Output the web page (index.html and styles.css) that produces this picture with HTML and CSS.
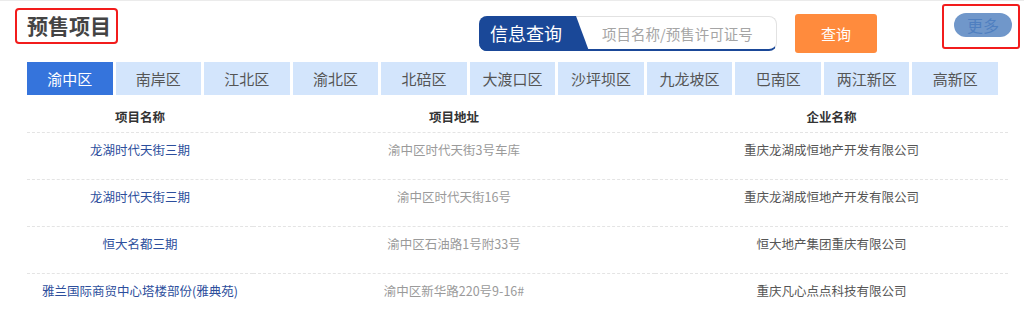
FILE: index.html
```html
<!DOCTYPE html>
<html lang="zh-CN">

<head>
    <meta charset="UTF-8">
    <meta name="viewport" content="width=device-width, initial-scale=1.0">
    <title>预售项目</title>
    <link rel="stylesheet" href="styles.css">
</head>

<body>
    <div class="page">
        <div class="top">
            <div class="title-box">预售项目</div>
            <div class="search">
                <div class="search-label">信息查询</div>
                <input class="search-input" type="text" placeholder="项目名称/预售许可证号">
            </div>
            <button class="query-btn">查询</button>
            <div class="more-box">
                <span class="more">更多</span>
            </div>
        </div>

        <div class="tabs">
            <div class="tab active">渝中区</div>
            <div class="tab">南岸区</div>
            <div class="tab">江北区</div>
            <div class="tab">渝北区</div>
            <div class="tab">北碚区</div>
            <div class="tab">大渡口区</div>
            <div class="tab">沙坪坝区</div>
            <div class="tab">九龙坡区</div>
            <div class="tab">巴南区</div>
            <div class="tab">两江新区</div>
            <div class="tab">高新区</div>
        </div>

        <table class="list">
            <thead>
                <tr>
                    <th class="col-name">项目名称</th>
                    <th class="col-addr">项目地址</th>
                    <th class="col-corp">企业名称</th>
                </tr>
            </thead>
            <tbody>
                <tr>
                    <td class="name">龙湖时代天街三期</td>
                    <td class="addr">渝中区时代天街3号车库</td>
                    <td class="corp">重庆龙湖成恒地产开发有限公司</td>
                </tr>
                <tr>
                    <td class="name">龙湖时代天街三期</td>
                    <td class="addr">渝中区时代天街16号</td>
                    <td class="corp">重庆龙湖成恒地产开发有限公司</td>
                </tr>
                <tr>
                    <td class="name">恒大名都三期</td>
                    <td class="addr">渝中区石油路1号附33号</td>
                    <td class="corp">恒大地产集团重庆有限公司</td>
                </tr>
                <tr>
                    <td class="name">雅兰国际商贸中心塔楼部份(雅典苑)</td>
                    <td class="addr">渝中区新华路220号9-16#</td>
                    <td class="corp">重庆凡心点点科技有限公司</td>
                </tr>
            </tbody>
        </table>
    </div>
</body>

</html>
```

FILE: styles.css
```css
body {
    margin: 0;
    padding: 0;
    background-color: #fff;
    font-family: "Noto Sans CJK SC", "Microsoft YaHei", sans-serif;
    color: #333;
}

.page {
    border-top: 1px solid #ebebeb;
    height: 312px;
    overflow: hidden;
}

/* header bar */
.top {
    display: flex;
    align-items: flex-start;
    height: 61px;
}

.title-box {
    box-sizing: border-box;
    width: 103px;
    height: 36px;
    margin: 7px 0 0 15px;
    padding-left: 10px;
    border: 2px solid #f21c1c;
    border-radius: 4px;
    font-size: 21px;
    font-weight: bold;
    line-height: 31px;
    color: #444;
}

.search {
    position: relative;
    box-sizing: border-box;
    width: 298px;
    height: 35px;
    margin: 15px 0 0 361px;
    border: 1px solid #e2e2e2;
    border-left: none;
    border-bottom: 2px solid #1a4898;
    border-radius: 8px;
}

.search-label {
    position: absolute;
    top: -1px;
    left: 0;
    bottom: -2px;
    width: 110px;
    padding-left: 11px;
    box-sizing: border-box;
    background-color: #1a4898;
    border-radius: 8px 0 0 8px;
    clip-path: polygon(0 0, 97px 0, 110px 100%, 0 100%);
    color: #fff;
    font-size: 18px;
    line-height: 34px;
}

.search-input {
    box-sizing: border-box;
    width: 100%;
    height: 100%;
    padding: 0 0 0 123px;
    border: none;
    outline: none;
    background: transparent;
    font-family: inherit;
    font-size: 14.5px;
    color: #333;
}

.search-input::placeholder {
    color: #a5a5a5;
}

.query-btn {
    width: 82px;
    height: 39px;
    margin: 13px 0 0 18px;
    border: none;
    border-radius: 3px;
    background-color: #ff8b3d;
    color: #fff;
    font-family: inherit;
    font-size: 15px;
}

.more-box {
    box-sizing: border-box;
    width: 78px;
    height: 45px;
    margin: 3px 0 0 65px;
    padding: 7px 0 0 10px;
    border: 2px solid #f21c1c;
    border-radius: 3px;
}

.more {
    display: block;
    width: 58px;
    height: 24px;
    border-radius: 12px;
    background-color: #7097ca;
    color: #4f7fc0;
    font-size: 16px;
    line-height: 24px;
    text-align: center;
}

/* district tabs */
.tabs {
    display: flex;
    gap: 3px;
    width: 971px;
    height: 33px;
    margin-left: 27px;
}

.tab {
    flex: 1;
    background-color: #d3e5fc;
    color: #555;
    font-size: 15px;
    line-height: 33px;
    text-align: center;
}

.tab.active {
    background-color: #3574dc;
    color: #fff;
}

/* project list */
.list {
    width: 981px;
    margin-left: 27px;
    border-collapse: collapse;
    font-size: 12.5px;
    line-height: 14px;
    text-align: center;
}

.list th {
    padding: 15px 0 8px;
    font-weight: bold;
    color: #333;
}

.list td {
    padding: 10px 0 22px;
    border-top: 1px dashed #e4e4e4;
}

.col-name {
    width: 226px;
}

.col-addr {
    width: 402px;
}

.list .name {
    color: #2c4e9c;
}

.list .addr {
    color: #9a9a9a;
}

.list .corp {
    color: #555;
}
```
